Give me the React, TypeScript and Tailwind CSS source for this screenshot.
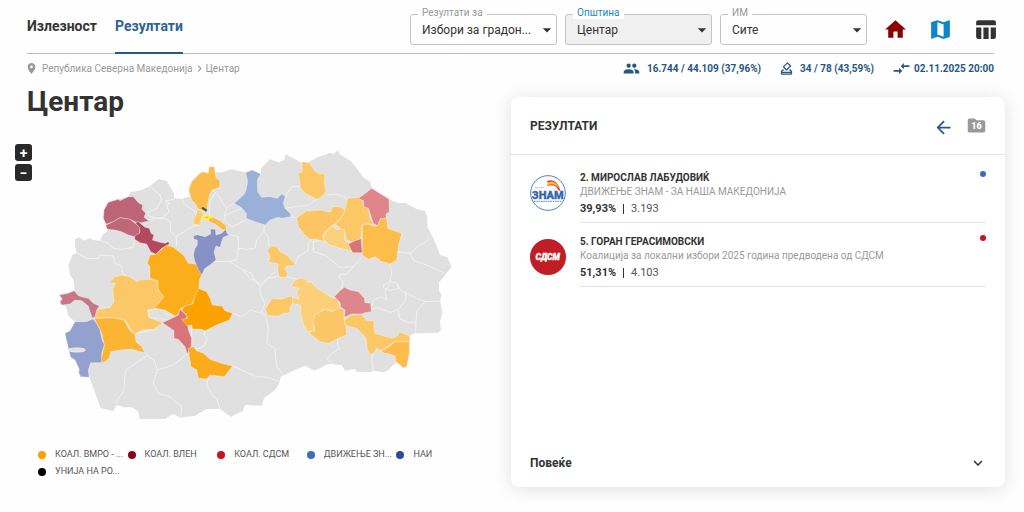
import React, { useState } from 'react';
import {
  MdArrowBack,
  MdArrowDropDown,
  MdChevronRight,
  MdCompareArrows,
  MdFolder,
  MdGroup,
  MdHome,
  MdKeyboardArrowDown,
  MdMap,
  MdOutlineHowToVote,
  MdPlace,
  MdTableChart,
} from 'react-icons/md';

interface SelectFieldProps {
  id: string;
  label: string;
  value: string;
  active?: boolean;
}

interface MapSheet {
  dx: number;
  dy: number;
  zones: [fill: string, points: string][];
  borders: string[];
}

const COUNTRY =
  '75,450 70,420 60,405 55,375 67,345 80,338 75,320 76,297 88,292 102,302 120,294 130,300 150,302 158,285 175,270 167,255 160,235 162,210 175,187 205,178 235,170 240,157 275,150 300,138 325,118 350,122 372,160 372,175 395,177 415,170 425,170 416,150 425,125 450,100 460,95 475,100 477,80 493,80 495,97 515,97 545,88 585,97 605,90 632,102 633,85 660,58 685,67 703,60 707,43 735,58 753,68 777,65 805,50 825,45 838,38 850,42 865,30 868,42 905,65 940,112 962,127 965,145 1017,177 1045,190 1065,188 1100,207 1125,213 1132,230 1132,262 1150,293 1170,345 1192,352 1205,380 1180,412 1167,427 1167,452 1175,465 1170,480 1177,520 1170,545 1173,572 1163,578 1097,580 1080,588 1077,630 1070,675 1060,683 1042,665 1032,672 1015,690 1000,697 972,692 960,697 920,695 915,687 885,692 875,675 835,672 815,682 793,692 765,677 735,690 692,710 688,730 675,750 642,775 635,797 585,795 578,813 542,830 510,807 470,807 435,827 390,833 370,822 345,837 268,837 265,815 245,802 225,802 200,796 190,813 152,805 118,710 90,710 88,690 75,660 62,650 55,620 45,580 60,572 75,545 55,528 48,500 28,490 37,480 28,465 72,452 72,440';

// Each sheet carries its own local origin inside the country outline
const SHEETS: MapSheet[] = [
  {
    dx: 0,
    dy: 0,
    zones: [
      ['#be6477', '167,250 160,235 162,210 175,187 205,178 210,182 235,170 250,170 265,188 278,195 276,208 287,220 282,232 297,243 270,248 255,245 240,238 210,233 190,245 170,252'],
      ['#bf6679', '167,256 190,245 210,233 240,238 255,250 270,262 268,280 255,290 235,285 215,275 195,270 172,268'],
      ['#b4485f', '255,248 265,245 285,262 298,265 303,280 312,285 307,300 330,307 345,310 355,305 358,313 335,325 318,343 302,335 290,312 270,308 253,297 255,287 270,278 268,262'],
      ['#fcad1c', '300,345 318,343 350,315 370,322 400,345 415,370 443,373 455,405 448,420 447,445 437,470 425,492 405,498 390,508 385,523 375,528 345,510 312,505 340,470 325,450 323,422 300,415 300,380 292,370'],
    ],
    borders: [
      '300,138 330,165 335,180 320,205 285,220',
      '372,178 345,183 360,190 350,195 357,215 340,232 320,235 290,225',
      '395,177 405,195 430,210 437,225',
      '290,240 320,235 345,235 360,245 362,275 378,290 380,320',
      '378,290 410,270 430,258 450,255',
      '150,300 175,310 190,325 215,328 250,322 253,297',
      '80,338 110,355 145,355 150,345 190,348 195,370 215,378 218,400 230,408',
    ],
  },
  {
    dx: 420,
    dy: 0,
    zones: [
      ['#fcbc4c', '-4,150 5,125 30,100 40,95 55,100 57,80 73,80 75,97 78,112 90,125 89,142 67,150 58,165 54,190 50,210 25,208 15,190 5,180 0,165'],
      ['#fdcb6e', '22,208 35,215 42,225 35,235 30,255 10,253 10,235 20,222'],
      ['#fcb944', '53,235 65,230 90,242 107,256 110,269 98,270 75,252 58,245'],
      ['#fff200', '36,230 48,225 62,225 66,232 52,239 38,237'],
      ['#f0a400', '45,231 52,229 55,233 48,235'],
      ['#8791c5', '10,288 22,284 45,290 62,282 62,267 76,268 78,285 95,280 107,268 112,282 119,284 100,292 95,305 90,322 78,318 72,335 78,360 60,375 45,385 35,405 25,390 15,365 10,345 15,325 22,315 22,300 12,298'],
      ['#9ab0d8', '167,98 187,90 212,102 202,120 203,155 215,172 240,170 262,175 275,162 286,168 280,190 285,205 300,220 303,230 275,235 265,232 240,240 225,255 195,245 168,235 170,222 155,203 132,190 150,175 165,160 168,150 173,125'],
      ['#fbc767', '335,65 358,68 372,90 385,100 405,103 403,130 408,155 395,170 380,178 345,160 330,140 330,125 323,100 337,95'],
      ['#fbc767', '245,317 260,320 270,335 295,348 300,358 315,372 312,377 290,378 283,385 293,400 290,412 268,412 262,385 265,372 235,365 240,350 232,332'],
    ],
    borders: [
      '66,150 80,160 100,190 110,205 103,225 107,235 100,240',
      '75,160 60,185 57,220 60,232',
      '110,205 130,190',
      '103,228 130,215 160,205',
      '103,240 125,262 150,250 168,240',
      '119,284 145,290 145,325 140,358 120,365 35,365',
      '145,325 170,328 195,325 200,300 222,275 222,250',
      '120,365 150,385 185,400 190,420 208,435 232,415 262,410',
      '222,275 235,290 237,318',
      '286,168 305,140 330,140',
      '285,205 320,200 355,195 380,178',
      '303,230 320,235',
      '365,298 355,310 355,330 325,350 315,372',
    ],
  },
  {
    dx: 780,
    dy: 0,
    zones: [
      ['#fbc563', '-40,235 -33,228 -10,213 0,213 35,210 50,215 63,215 67,200 90,200 105,210 100,225 75,252 65,258 45,275 38,290 43,305 20,298 0,298 -20,280 -35,260'],
      ['#fcc766', '113,175 145,172 158,180 160,195 175,207 180,235 192,255 170,250 155,258 153,295 130,308 110,300 104,275 75,253 100,225 107,200'],
      ['#fdd07b', '65,257 80,268 103,268 104,300 115,310 130,335 90,325 60,315 40,300 42,285'],
      ['#d9737c', '115,312 135,302 153,296 157,338 128,338'],
      ['#de868c', '145,175 160,165 185,145 237,177 238,215 228,222 228,235 213,235 202,257 190,250 180,220 175,205 162,200 160,182'],
      ['#fdbd4b', '157,255 175,252 190,258 202,257 213,235 230,235 233,265 275,280 265,320 260,360 240,372 215,365 195,350 175,358 157,345'],
    ],
    borders: [
      '50,165 80,162 110,175',
      '40,300 10,305 10,335 45,345 90,382 130,380 157,350',
      '130,380 110,402 88,405 88,415 100,425 95,445',
      '240,372 245,395 240,425 220,435 222,445 240,452 265,445 262,430 240,425',
      '262,335 300,340 320,322 365,293',
      '300,340 312,362 350,375 400,398',
    ],
  },
  {
    dx: 0,
    dy: 390,
    zones: [
      ['#fcc766', '178,38 195,20 215,15 240,20 260,35 275,28 295,28 323,32 325,60 342,80 312,117 292,120 297,142 340,160 310,178 275,180 255,193 240,175 225,150 190,143 133,143 140,120 180,112 192,95 188,60 195,40'],
      ['#fdb432', '133,145 190,143 222,150 240,182 255,193 258,215 275,230 285,248 245,238 210,240 182,245 178,265 160,278 153,270 163,225 155,190 140,160'],
      ['#94a0cd', '45,190 60,182 75,155 110,155 128,147 138,157 150,180 155,205 163,225 155,250 155,278 122,278 115,300 117,322 92,320 86,308 88,298 75,270 62,262 55,235'],
      ['#c67688', '28,75 55,70 72,62 85,77 100,82 115,85 130,100 148,108 140,120 135,140 128,145 118,120 115,108 95,92 75,90 60,102 35,105 30,95 37,87'],
      ['#e0e0e0', '297,122 325,116 342,127 365,138 350,150 325,145 297,142'],
      ['#d97479', '337,158 360,148 385,135 390,118 412,138 405,150 412,160 415,180 425,205 423,230 412,252 405,230 385,208 372,205 372,182 355,170'],
    ],
    borders: [
      '258,190 300,182 337,160',
      '285,248 292,258 312,270 322,300 310,340 325,370 360,380 395,410 393,440',
      '322,300 370,285 412,252',
      '290,257 228,300 225,320 222,360 197,400',
    ],
  },
  {
    dx: 390,
    dy: 390,
    zones: [
      ['#fba200', '55,55 80,65 90,85 97,105 125,108 135,122 158,130 148,150 110,165 75,182 65,178 37,177 35,165 22,168 5,148 22,145 20,135 5,120 15,108 38,102 45,80'],
      ['#fcab1c', '25,235 40,230 50,242 70,250 90,268 125,280 158,288 133,320 90,315 80,327 55,325 50,300 33,290 28,260'],
      ['#fdcf78', '335,45 345,30 360,25 378,28 383,37 395,35 400,45 415,58 430,65 450,80 470,86 482,112 460,125 432,118 408,135 410,155 400,172 403,185 382,185 370,160 362,130 362,105 345,103 335,95 337,82 357,87 350,68 358,55 340,52'],
      ['#fcc864', '255,118 270,95 275,85 305,88 325,80 337,78 337,100 330,112 330,128 310,130 295,138 265,137'],
    ],
    borders: [
      '190,0 215,30 225,28 240,45 240,70 255,100 245,125 258,140 265,180 260,220 285,235 290,290 310,315',
      '158,130 185,140 210,120 245,130',
      '245,48 275,12 290,5',
      '320,20 350,27',
      '75,182 72,195 82,205 75,225 60,235 40,235',
      '35,177 35,215 28,235',
      '158,288 230,320 265,322 298,335',
      '85,325 80,345 100,380 110,385 120,417',
    ],
  },
  {
    dx: 780,
    dy: 390,
    zones: [
      ['#fbc766', '15,135 45,118 68,125 85,113 102,118 102,150 108,170 110,195 85,205 55,220 30,215 -5,187 15,182 10,160'],
      ['#de868c', '73,80 90,62 103,52 120,60 145,65 163,85 165,98 182,100 184,125 165,128 155,132 125,132 103,142 105,120 92,112 90,97'],
      ['#fcc766', '105,148 125,135 155,133 170,152 192,152 192,170 195,190 220,197 245,205 262,198 268,185 298,197 300,215 255,215 235,228 213,243 200,235 190,250 182,255 172,240 168,205 155,190 140,175 110,168 103,158'],
      ['#fdbc4b', '213,243 240,228 255,215 298,215 298,250 290,290 280,293 258,275 255,258 240,252 222,250'],
    ],
    borders: [
      '182,120 190,90 215,80 230,90 225,65 240,40',
      '265,45 270,60 287,68 287,90 265,118 240,127 200,112 183,120',
      '287,68 320,85 345,95 392,93',
      '345,95 320,125 318,155 295,158 268,145 265,118',
      '318,155 317,188 300,197',
      '110,170 85,190 82,225 90,235 65,250 52,268 72,282',
      '190,250 185,270 190,302',
    ],
  },
];

const LEGEND = [
  { name: 'КОАЛ. ВМРО - ...', dot: 'bg-[#fba200]' },
  { name: 'КОАЛ. ВЛЕН', dot: 'bg-[#900020]' },
  { name: 'КОАЛ. СДСМ', dot: 'bg-[#c2181d]' },
  { name: 'ДВИЖЕЊЕ ЗН...', dot: 'bg-[#3e6db9]' },
  { name: 'НАИ', dot: 'bg-[#2f4b9f]' },
  { name: 'УНИЈА НА РО...', dot: 'bg-black' },
];

const SelectField: React.FC<SelectFieldProps> = ({ id, label, value, active }) => (
  <div className="relative w-[147px]">
    <label
      htmlFor={id}
      className={`absolute -top-[7px] left-2 px-1 text-[10px] leading-3 bg-[#fefefe] ${active ? 'text-[#1888c9]' : 'text-[#999]'}`}
    >
      {label}
    </label>
    <select
      id={id}
      className={`w-full h-[31px] appearance-none rounded-[3px] border border-[#c4c4c4] pl-[11px] pr-6 text-[12px] text-[#333] ${active ? 'bg-[#f0f0f0]' : 'bg-[#fefefe]'}`}
    >
      <option>{value}</option>
    </select>
    <MdArrowDropDown size={20} className="absolute right-0 top-[6px] text-[#333] pointer-events-none" />
  </div>
);

const CountryMap: React.FC = () => (
  <svg viewBox="0 0 1230 870" className="w-full max-w-[410px]" role="img" aria-label="Мапа">
    <g stroke="#f2f2f2" strokeWidth="3" strokeLinejoin="round" fill="none">
      <polygon points={COUNTRY} fill="#e0e0e0" stroke="none" />
      {SHEETS.map((sheet, i) => (
        <g key={i} transform={`translate(${sheet.dx} ${sheet.dy})`}>
          {sheet.borders.map((points) => (
            <polyline key={points} points={points} />
          ))}
        </g>
      ))}
      {SHEETS.map((sheet, i) => (
        <g key={i} transform={`translate(${sheet.dx} ${sheet.dy})`} stroke="#fff" strokeOpacity="0.5" strokeWidth="2">
          {sheet.zones.map(([fill, points]) => (
            <polygon key={points} points={points} fill={fill} />
          ))}
        </g>
      ))}
      <path d="M456 203l14 9" stroke="#555" strokeWidth="7" />
      <ellipse cx="80" cy="630" rx="26" ry="6" fill="#e0e0e0" />
    </g>
  </svg>
);

const ZnamLogo: React.FC = () => (
  <svg width="36" height="36" viewBox="0 0 108 108" aria-hidden="true">
    <circle cx="54" cy="54" r="52" fill="#fff" stroke="#4f7dc0" strokeWidth="3" />
    <path d="M50 19C62 12 84 15 92 49L84 45C80 33 68 27 48 34L57 27Z" fill="#e8432e" />
    <path d="M52 23C66 16 82 22 89 43C80 29 66 25 52 30Z" fill="#fdc328" />
    <text x="53" y="72" textAnchor="middle" fontSize="33" fontWeight="900" fill="#3567b1" stroke="#3567b1" strokeWidth="1" fontFamily="Roboto, sans-serif">ЗНАМ</text>
    <path d="M14 38h30" stroke="#a9c0e0" strokeWidth="3" strokeDasharray="5 1" />
    <path d="M12 79h84" stroke="#7d9fce" strokeWidth="4" strokeDasharray="5 2" />
  </svg>
);

const SdsmLogo: React.FC = () => (
  <svg width="36" height="36" viewBox="0 0 108 108" aria-hidden="true">
    <circle cx="54" cy="54" r="54" fill="#c01d25" />
    <text x="53" y="64" textAnchor="middle" fontSize="26" fontWeight="900" fontStyle="italic" fill="#fff" stroke="#fff" strokeWidth="1" fontFamily="Roboto, sans-serif">СДСМ</text>
  </svg>
);

const CANDIDATES = [
  {
    name: '2. МИРОСЛАВ ЛАБУДОВИЌ',
    party: 'ДВИЖЕЊЕ ЗНАМ - ЗА НАША МАКЕДОНИЈА',
    share: '39,93%',
    votes: '3.193',
    dot: 'bg-[#3e6db9]',
    logo: <ZnamLogo />,
  },
  {
    name: '5. ГОРАН ГЕРАСИМОВСКИ',
    party: 'Коалиција за локални избори 2025 година предводена од СДСМ',
    share: '51,31%',
    votes: '4.103',
    dot: 'bg-[#c2181d]',
    logo: <SdsmLogo />,
  },
];

const App: React.FC = () => {
  const [tab, setTab] = useState('Резултати');

  return (
    <div className="min-h-screen bg-[#fefefe] font-[Roboto,sans-serif] text-[#333]">
      <header className="ml-[27px] mr-[30px] flex items-stretch justify-between border-b border-[#bdbdbd]">
        <nav className="flex gap-[18px]">
          {['Излезност', 'Резултати'].map((name) => (
            <button
              key={name}
              type="button"
              onClick={() => setTab(name)}
              className={`-mb-px h-[54px] border-b-2 text-sm font-bold ${tab === name ? 'border-[#285a87] text-[#2e6391]' : 'border-transparent'}`}
            >
              {name}
            </button>
          ))}
        </nav>
        <div className="-mr-[2px] flex items-center gap-2 pt-[6px]">
          <SelectField id="race" label="Резултати за" value="Избори за градон..." />
          <SelectField id="town" label="Општина" value="Центар" active />
          <SelectField id="station" label="ИМ" value="Сите" />
          <div className="ml-2 flex items-center gap-5">
            <a href="#home" aria-label="Почетна"><MdHome size={25} className="text-[#8b0000]" /></a>
            <a href="#map" aria-label="Мапа"><MdMap size={25} className="text-[#0d87cb]" /></a>
            <a href="#table" aria-label="Табела" className="-mr-[2px]"><MdTableChart size={25} /></a>
          </div>
        </div>
      </header>

      <div className="ml-[25px] mr-[30px] flex h-7 items-center justify-between pt-px">
        <nav className="flex items-center text-[10px] text-[#999]">
          <MdPlace size={13} className="mr-1" />
          <a href="#country">Република Северна Македонија</a>
          <MdChevronRight size={13} />
          <a href="#centar">Центар</a>
        </nav>
        <div className="flex items-center gap-[18px] text-[10px] font-bold text-[#285783]">
          <span className="flex items-center gap-[7px]"><MdGroup size={17} />16.744 / 44.109 (37,96%)</span>
          <span className="flex items-center gap-[6px]"><MdOutlineHowToVote size={15} />34 / 78 (43,59%)</span>
          <span className="flex items-center gap-[3px]"><MdCompareArrows size={19} />02.11.2025 20:00</span>
        </div>
      </div>

      <main className="grid grid-cols-[511fr_494fr] pr-[19px]">
        <section>
          <h1 className="ml-[27px] mt-1 text-[28px] leading-8 font-bold">Центар</h1>
          <div className="ml-[15px] mt-[22px] flex items-start gap-[18px]">
            <div className="mt-1 flex flex-col gap-[3px]">
              <button type="button" className="size-[17px] rounded-[3px] bg-[#292929] text-white flex items-center justify-center text-sm leading-none font-bold">+</button>
              <button type="button" className="size-[17px] rounded-[3px] bg-[#292929] text-white flex items-center justify-center text-sm leading-none font-bold">−</button>
            </div>
            <CountryMap />
          </div>
          <ul className="ml-[38px] mt-4 grid max-w-[448px] grid-cols-5 text-[9px] leading-[17px] text-[#555]">
            {LEGEND.map((item) => (
              <li key={item.name} className="flex items-center gap-[9px] whitespace-nowrap">
                <span className={`size-2 shrink-0 rounded-full ${item.dot}`} />
                {item.name}
              </li>
            ))}
          </ul>
        </section>

        <section className="mt-[15px] flex h-[390px] flex-col rounded-lg bg-white shadow-[0_2px_18px_rgba(0,0,0,0.12)]">
          <div className="flex h-[58px] items-center justify-between border-b border-[#e3e3e3] pl-[19px] pr-[18px]">
            <h2 className="text-[12px] font-bold">РЕЗУЛТАТИ</h2>
            <div className="flex items-center gap-3">
              <button type="button" aria-label="Назад"><MdArrowBack size={21} className="mt-[3px] text-[#285a87]" /></button>
              <button type="button" className="relative">
                <MdFolder size={21} className="text-[#999]" />
                <span className="absolute inset-0 flex items-center justify-center pt-[2px] text-[9px] font-black text-white">16</span>
              </button>
            </div>
          </div>
          <ul className="flex-1 px-[19px] pt-1">
            {CANDIDATES.map((c) => (
              <li key={c.name} className="flex gap-[14px]">
                <div className="mt-4">{c.logo}</div>
                <div className="flex h-16 flex-1 items-start justify-between border-b border-[#e3e3e3] pt-3">
                  <div>
                    <h3 className="text-[10px] leading-[14px] font-bold">{c.name}</h3>
                    <p className="text-[10px] leading-[14px] text-[#999]">{c.party}</p>
                    <p className="mt-[3px] flex items-center gap-[7px] text-[11px] leading-[14px]">
                      <span className="font-bold">{c.share}</span>
                      <span className="h-[10px] border-l border-[#333]" />
                      <span className="text-[#555]">{c.votes}</span>
                    </p>
                  </div>
                  <span className={`size-[6px] rounded-full ${c.dot}`} />
                </div>
              </li>
            ))}
          </ul>
          <button type="button" className="flex h-12 items-center justify-between pl-[19px] pr-[18px] text-[12px] font-bold">
            Повеќе
            <MdKeyboardArrowDown size={18} />
          </button>
        </section>
      </main>
    </div>
  );
};

export default App;
